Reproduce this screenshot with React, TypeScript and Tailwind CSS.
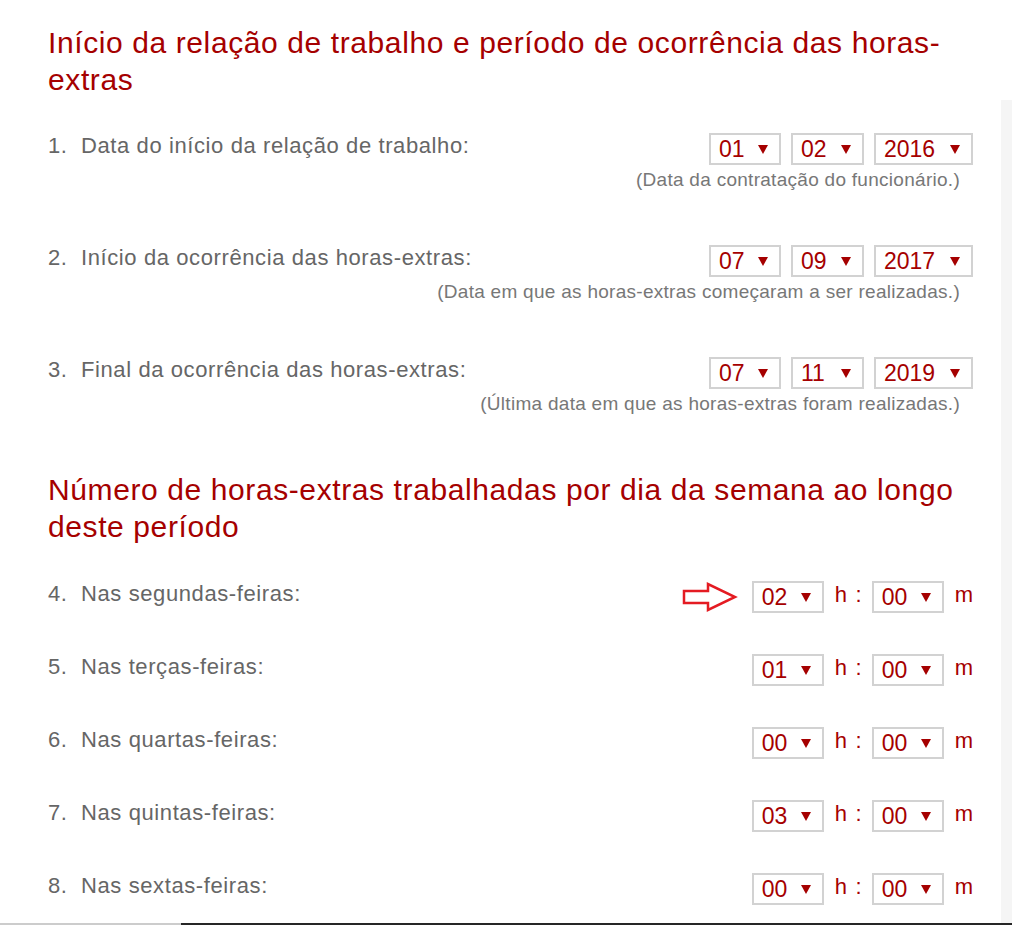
import React from "react";

const RED = "text-[#a50000]";

function Tri() {
  return (
    <svg width="10" height="10" viewBox="0 0 10 10" className="shrink-0">
      <polygon points="0,1 10,1 5,10" fill="#a50000" />
    </svg>
  );
}

function Sel({ v, w }: { v: string; w: string }) {
  return (
    <div
      className={`${w} h-[32px] border-2 border-[#d2d2d2] bg-white flex items-center justify-between pl-[8px] pr-[11px] text-[23px] leading-none ${RED}`}
    >
      <span>{v}</span>
      <Tri />
    </div>
  );
}

function Label({ n, label }: { n: string; label: string }) {
  return (
    <div className="flex whitespace-nowrap text-[22px] leading-[26px] tracking-[0.6px] text-[#666]">
      <span className="w-[33px]">{n}</span>
      <span>{label}</span>
    </div>
  );
}

function DateRow({
  n,
  label,
  d,
  m,
  y,
  hint,
}: {
  n: string;
  label: string;
  d: string;
  m: string;
  y: string;
  hint: string;
}) {
  return (
    <div className="h-[112px] flex flex-col">
      <div className="flex justify-between items-start">
        <Label n={n} label={label} />
        <div className="flex gap-[10px]">
          <Sel v={d} w="w-[72px]" />
          <Sel v={m} w="w-[73px]" />
          <Sel v={y} w="w-[99px]" />
        </div>
      </div>
      <div className="text-right whitespace-nowrap text-[19px] leading-[22px] tracking-[0.28px] text-[#777] pr-[13px] mt-[4px]">
        {hint}
      </div>
    </div>
  );
}

function Arrow() {
  return (
    <svg width="56" height="30" viewBox="0 0 56 30" className="mr-[14px]">
      <polygon
        points="2,9 26,9 26,2 53,15 26,28 26,21 2,21"
        fill="none"
        stroke="#e41b22"
        strokeWidth="2.5"
        strokeLinejoin="miter"
      />
    </svg>
  );
}

function HourRow({ n, label, h, arrow }: { n: string; label: string; h: string; arrow?: boolean }) {
  return (
    <div className="h-[73px] flex justify-between items-start">
      <Label n={n} label={label} />
      <div className="flex items-center">
        {arrow && <Arrow />}
        <Sel v={h} w="w-[72px]" />
        <span className={`w-[27px] flex justify-between text-[22px] ml-[11px] mr-[10px] ${RED} -mt-[5px]`}>
          <span>h</span>
          <span>:</span>
        </span>
        <Sel v="00" w="w-[72px]" />
        <span className={`text-[22px] ml-[11px] ${RED} -mt-[5px]`}>m</span>
      </div>
    </div>
  );
}

export default function App() {
  return (
    <div className="w-[1024px] h-[931px] bg-white overflow-hidden font-['Liberation_Sans',Arial,sans-serif]">
      <div className="flex h-[923px]">
        <div className="w-[1001px] pl-[48px] pr-[28px] pt-[24px]">
          <h1 className={`text-[30px] leading-[37px] tracking-[0.6px] ${RED} font-normal`}>
            Início da relação de trabalho e período de ocorrência das horas-extras
          </h1>
          <div className="mt-[35px]">
            <DateRow
              n="1."
              label="Data do início da relação de trabalho:"
              d="01"
              m="02"
              y="2016"
              hint="(Data da contratação do funcionário.)"
            />
            <DateRow
              n="2."
              label="Início da ocorrência das horas-extras:"
              d="07"
              m="09"
              y="2017"
              hint="(Data em que as horas-extras começaram a ser realizadas.)"
            />
            <DateRow
              n="3."
              label="Final da ocorrência das horas-extras:"
              d="07"
              m="11"
              y="2019"
              hint="(Última data em que as horas-extras foram realizadas.)"
            />
          </div>
          <h1 className={`text-[30px] leading-[37px] tracking-[0.6px] ${RED} font-normal mt-[2px]`}>
            Número de horas-extras trabalhadas por dia da semana ao longo deste período
          </h1>
          <div className="mt-[36px]">
            <HourRow n="4." label="Nas segundas-feiras:" h="02" arrow />
            <HourRow n="5." label="Nas terças-feiras:" h="01" />
            <HourRow n="6." label="Nas quartas-feiras:" h="00" />
            <HourRow n="7." label="Nas quintas-feiras:" h="03" />
            <HourRow n="8." label="Nas sextas-feiras:" h="00" />
          </div>
        </div>
        <div className="w-[11px] mt-[100px] bg-[#f5f5f5]" />
      </div>
      <div className="flex h-[2px]">
        <div className="w-[181px] bg-[#cccccc]" />
        <div className="w-[831px] bg-[#262626]" />
      </div>
    </div>
  );
}
